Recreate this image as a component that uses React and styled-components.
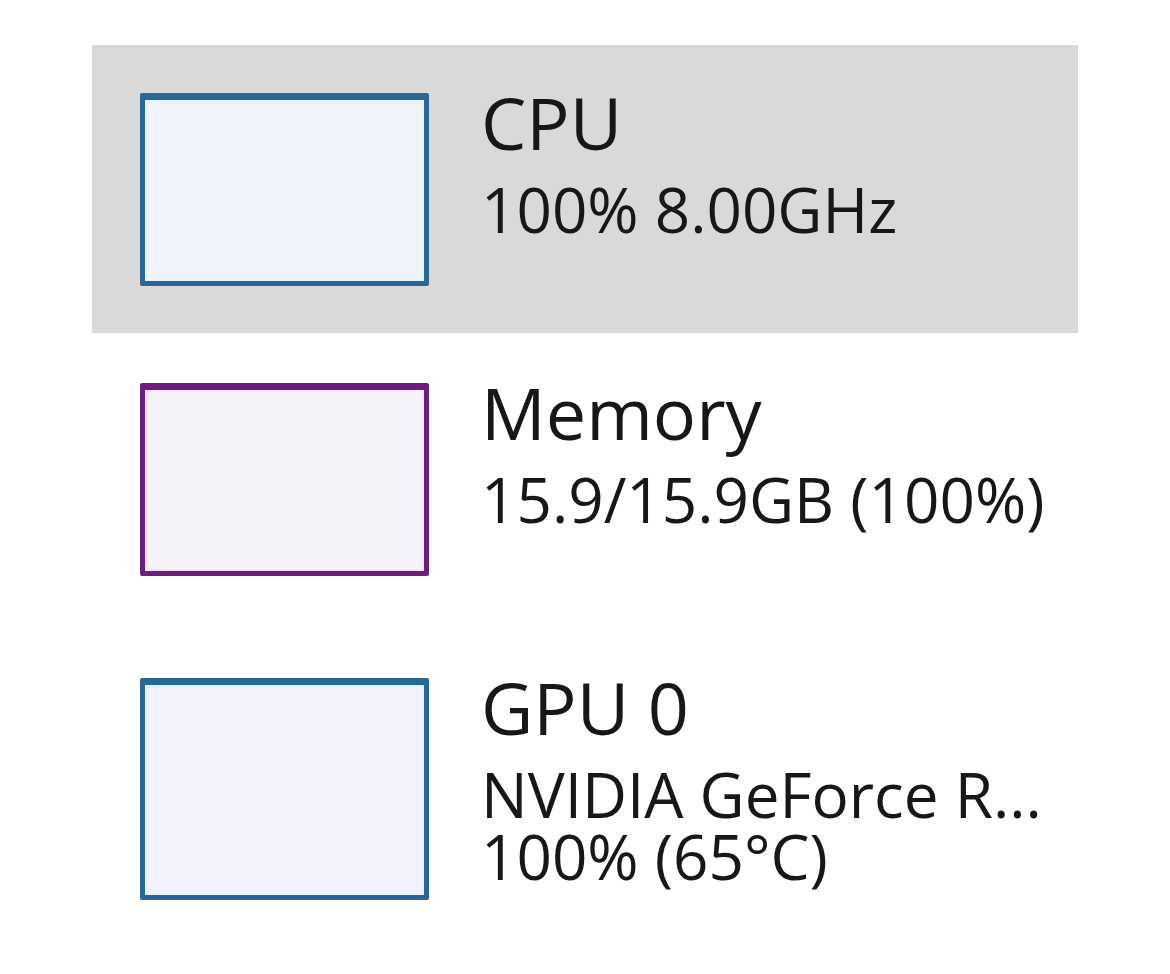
import React from 'react';
import styled, { createGlobalStyle } from 'styled-components';

const GlobalStyle = createGlobalStyle`
  html, body {
    margin: 0;
    padding: 0;
    background: #ffffff;
  }
  body {
    font-family: "Open Sans", "Noto Sans", "Liberation Sans", sans-serif;
    color: #171717;
  }
`;

const Page = styled.div`
  width: 1170px;
  height: 974px;
  padding: 45px 0 0 92px;
  box-sizing: border-box;
  overflow: hidden;
`;

const List = styled.div`
  width: 986px;
  display: flex;
  flex-direction: column;
  gap: 2px;
`;

const Item = styled.div`
  display: flex;
  align-items: flex-start;
  gap: 52px;
  padding: ${p => p.$padTop}px 48px 47px 48px;
  background: ${p => (p.$selected ? '#d9d9d9' : 'transparent')};
`;

const Thumb = styled.div`
  flex: none;
  width: 289px;
  height: ${p => p.$height}px;
  box-sizing: border-box;
  border: 5px solid ${p => p.$color};
  border-top-width: 7px;
  border-radius: 2px;
  background: ${p => p.$fill};
  box-shadow: inset 0 0 0 2px ${p => p.$halo};
`;

const Text = styled.div`
  display: flex;
  flex-direction: column;
  margin-top: -7px;
`;

const Title = styled.div`
  font-size: 72px;
  line-height: 72px;
  margin-bottom: 20px;
  white-space: nowrap;
`;

const Detail = styled.div`
  font-size: 62px;
  line-height: 62px;
  white-space: nowrap;
`;

const items = [
  {
    name: 'CPU',
    lines: ['100% 8.00GHz'],
    color: '#2a6696',
    fill: '#f1f3fc',
    halo: '#e2f6ff',
    height: 193,
    padTop: 48,
    selected: true,
  },
  {
    name: 'Memory',
    lines: ['15.9/15.9GB (100%)'],
    color: '#6c1f7e',
    fill: '#f5f3f9',
    halo: '#fbe3fb',
    height: 193,
    padTop: 48,
  },
  {
    name: 'GPU 0',
    lines: ['NVIDIA GeForce R...', '100% (65°C)'],
    color: '#2a6696',
    fill: '#f1f2fc',
    halo: '#e2f6ff',
    height: 222,
    padTop: 53,
  },
];

export default function App() {
  return (
    <>
      <GlobalStyle />
      <Page>
        <List>
          {items.map(it => (
            <Item key={it.name} $selected={it.selected} $padTop={it.padTop}>
              <Thumb $color={it.color} $fill={it.fill} $halo={it.halo} $height={it.height} />
              <Text>
                <Title>{it.name}</Title>
                {it.lines.map(l => (
                  <Detail key={l}>{l}</Detail>
                ))}
              </Text>
            </Item>
          ))}
        </List>
      </Page>
    </>
  );
}
